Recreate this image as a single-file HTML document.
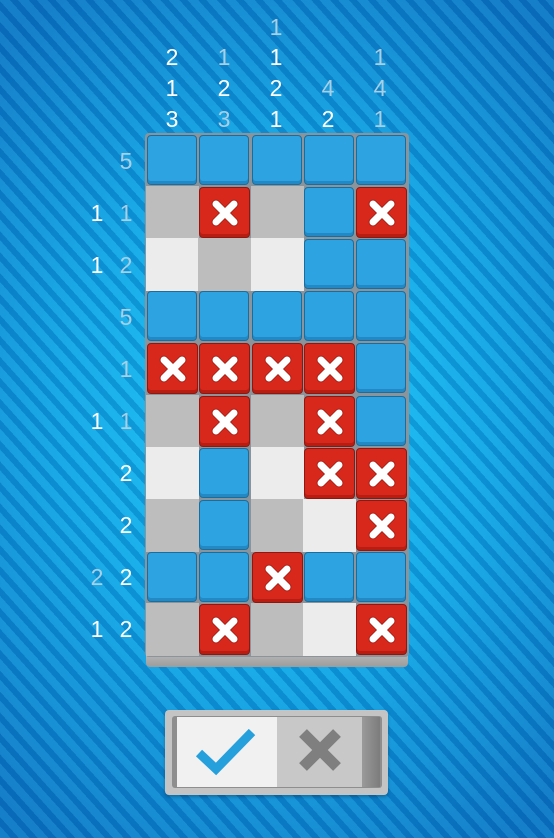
<!DOCTYPE html>
<html><head><meta charset="utf-8"><style>
html,body{margin:0;padding:0;}
body{width:554px;height:838px;overflow:hidden;position:relative;font-family:"Liberation Sans",sans-serif;
background:
repeating-linear-gradient(48deg, rgba(255,255,255,0.05) 0px, rgba(255,255,255,0.05) 8px, rgba(0,40,120,0.18) 8px, rgba(0,40,120,0.18) 14px),
radial-gradient(ellipse 75% 60% at 50% 50%, #18c6f7 0%, #0ea8e8 50%, #0a78c6 100%);}
.t{position:absolute;font-size:23px;line-height:26px;width:30px;text-align:center;color:#fff;}
.g{color:#a9cfe4;}
.frame{position:absolute;left:145px;top:133px;width:264px;height:524px;background:#8a949a;border-radius:4px;}
.base{position:absolute;left:146px;top:655px;width:262px;height:12px;background:linear-gradient(#b4b4b4,#9c9c9c);border-radius:0 0 4px 4px;}
.c{position:absolute;width:52px;height:52px;box-sizing:border-box;}
.G{background:#bdbdbd;}
.W{background:#ececec;}
.B{background:#2ea3e1;border:1.5px solid #1d6d9c;border-radius:4px;box-shadow:inset 0 -3px 0 #2289c4;}
.X{background:#d8281c;border:1.5px solid #8e1810;border-radius:4px;box-shadow:inset 0 -3px 0 #b81d12;}
.X svg{position:absolute;left:9px;top:9px;}
</style></head><body>
<div class="t" style="left:157px;top:44px">2</div>
<div class="t" style="left:157px;top:75px">1</div>
<div class="t" style="left:157px;top:106px">3</div>
<div class="t g" style="left:209px;top:44px">1</div>
<div class="t" style="left:209px;top:75px">2</div>
<div class="t g" style="left:209px;top:106px">3</div>
<div class="t g" style="left:261px;top:14px">1</div>
<div class="t" style="left:261px;top:44px">1</div>
<div class="t" style="left:261px;top:75px">2</div>
<div class="t" style="left:261px;top:106px">1</div>
<div class="t g" style="left:313px;top:75px">4</div>
<div class="t" style="left:313px;top:106px">2</div>
<div class="t g" style="left:365px;top:44px">1</div>
<div class="t g" style="left:365px;top:75px">4</div>
<div class="t g" style="left:365px;top:106px">1</div>
<div class="t g" style="left:111px;top:148px">5</div>
<div class="t" style="left:82px;top:200px">1</div><div class="t g" style="left:111px;top:200px">1</div>
<div class="t" style="left:82px;top:252px">1</div><div class="t g" style="left:111px;top:252px">2</div>
<div class="t g" style="left:111px;top:304px">5</div>
<div class="t g" style="left:111px;top:356px">1</div>
<div class="t" style="left:82px;top:408px">1</div><div class="t g" style="left:111px;top:408px">1</div>
<div class="t" style="left:111px;top:460px">2</div>
<div class="t" style="left:111px;top:512px">2</div>
<div class="t g" style="left:82px;top:564px">2</div><div class="t" style="left:111px;top:564px">2</div>
<div class="t" style="left:82px;top:616px">1</div><div class="t" style="left:111px;top:616px">2</div>

<div class="base"></div>
<div class="frame"></div>
<div id="grid"></div>
<script>
var rows=["BBBBB","GXGBX","WGWBB","BBBBB","XXXXB","GXGXB","WBWXX","GBGWX","BBXBB","GXGWX"];
var h="";
var xs='<svg width="32" height="32" viewBox="0 0 32 32"><path d="M7 7L25 25M25 7L7 25" stroke="#7a1a12" stroke-width="9" stroke-linecap="round" opacity="0.5"/><path d="M7 7L25 25M25 7L7 25" stroke="#fff" stroke-width="7" stroke-linecap="round"/></svg>';
for(var r=0;r<10;r++)for(var c=0;c<5;c++){
 var t=rows[r][c];var L=146+52.3*c,T=134+52.1*r;
 if(t=="G"||t=="W"){h+='<div class="c '+t+'" style="left:'+L+'px;top:'+T+'px;width:53px;height:53px"></div>';}
}
for(var r=0;r<10;r++)for(var c=0;c<5;c++){
 var t=rows[r][c];var L=146+52.3*c,T=134+52.1*r;
 if(t=="B")h+='<div class="c B" style="left:'+(L+1)+'px;top:'+(T+1)+'px;width:50px;height:50px"></div>';
 if(t=="X")h+='<div class="c X" style="left:'+(L+1)+'px;top:'+(T+1)+'px;width:51px;height:51px">'+xs+'</div>';
}
document.getElementById("grid").innerHTML=h;
</script>

<div style="position:absolute;left:165px;top:710px;width:223px;height:85px;background:#c4c4c4;border-radius:4px;box-shadow:0 2px 3px rgba(0,0,0,0.25)"></div>
<div style="position:absolute;left:172px;top:716px;width:210px;height:72px;background:#8e8e8e;border-radius:3px"></div>
<div style="position:absolute;left:177px;top:717px;width:100px;height:70px;background:#f1f1f1"></div>
<div style="position:absolute;left:277px;top:717px;width:85px;height:70px;background:#c8c8c8"></div>
<div style="position:absolute;left:362px;top:717px;width:18px;height:70px;background:linear-gradient(90deg,#9a9a9a,#7c7c7c)"></div>
<svg style="position:absolute;left:196px;top:726px" width="60" height="52" viewBox="0 0 60 52"><path d="M3 27L20 43L56 6" fill="none" stroke="#26a0dd" stroke-width="9" stroke-linejoin="miter"/></svg>
<svg style="position:absolute;left:297px;top:727px" width="46" height="46" viewBox="0 0 46 46"><path d="M6 6L40 40M40 6L6 40" stroke="#7f7f7f" stroke-width="11"/></svg>
</body></html>
